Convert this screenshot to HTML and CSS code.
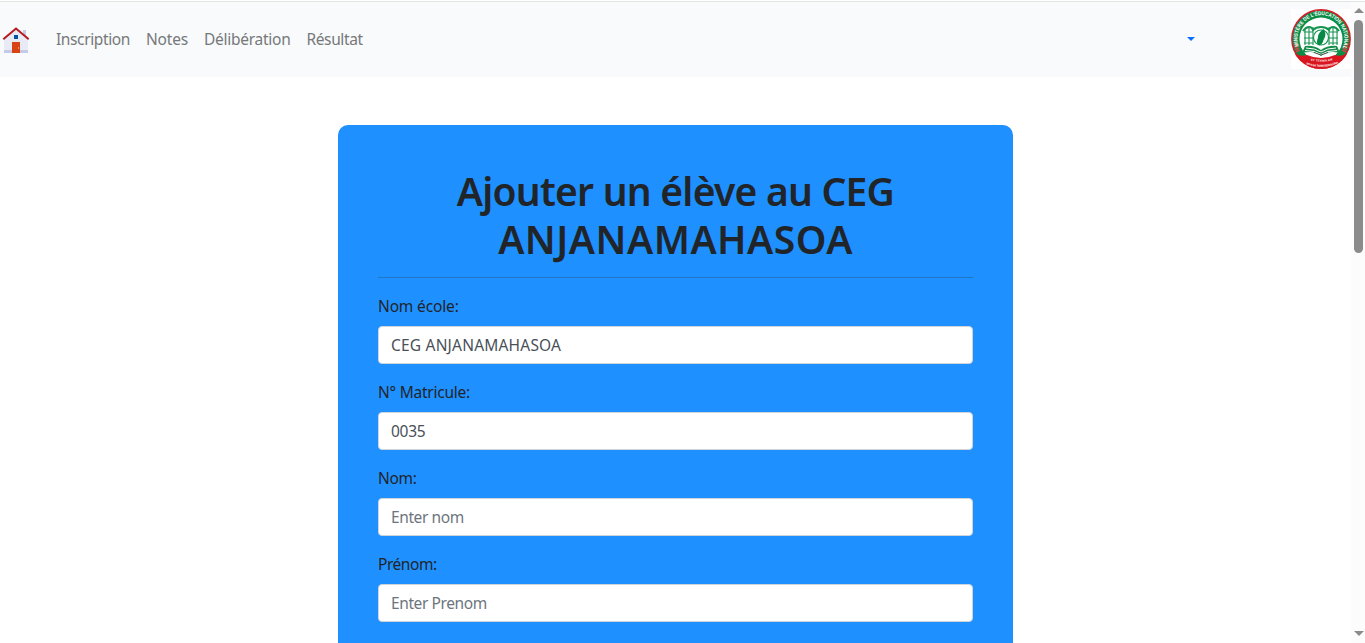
FILE: index.html
```html
<!DOCTYPE html>
<html lang="fr">
<head>
<meta charset="utf-8">
<title>Inscription</title>
<link rel="stylesheet" href="styles.css">
</head>
<body>
<div class="window">
  <div class="page">
    <nav class="navbar">
      <a class="brand" href="#" aria-label="Accueil">
        <svg width="32" height="32" viewBox="0 0 32 32">
          <path fill="#c5cae9" d="M23 6h3v8h-3z"/>
          <path fill="#e8eaf6" d="M4 14 16 4l12 10v13H4z"/>
          <path fill="#c5cae9" d="M4 26h24v3H4z"/>
          <path fill="#d84315" d="M12 18h8v11h-8z"/>
          <path fill="#01579b" d="M14 11h4v4h-4z"/>
          <path fill="none" stroke="#b71c1c" stroke-width="2" d="M3.300 15.300 16 4.600l12.700 10.700"/>
          <path fill="#ff8a65" d="M18 23h1v2h-1z"/>
        </svg>
      </a>
      <ul class="links">
        <li><a class="l-ins" href="#">Inscription</a></li>
        <li><a class="l-not" href="#">Notes</a></li>
        <li><a class="l-del" href="#">Délibération</a></li>
        <li><a class="l-res" href="#">Résultat</a></li>
      </ul>
      <span class="caret"></span>
      <svg class="seal" width="60" height="60" viewBox="0 0 60 60">
        <defs>
          <path id="arc-top" d="M8.900 40A23.500 23.500 0 1 1 51.100 40"/>
          <path id="arc-low" d="M11 53.500Q30 62 49 53.500"/>
          <path id="arc-mid" d="M14 49.500Q30 56 46 49.500"/>
          <clipPath id="disc"><circle cx="30" cy="30" r="30"/></clipPath>
        </defs>
        <path fill="#fff" d="M0 0h60v60H0z"/>
        <circle cx="30" cy="30" r="29.100" fill="#0b8c45" stroke="#d5202b" stroke-width="1.600"/>
        <circle cx="30" cy="30" r="21.500" fill="#fff"/>
        <path fill="#d9161f" clip-path="url(#disc)" d="M4 44.500Q10 48 16 46Q30 52 44 46Q50 48 56 44.500L60 60H0z"/>
        <g fill="none" stroke="#169451" stroke-width="1.100">
          <path d="M13 23h9M47 23h-9M13 29h9M47 29h-9M13 34h9M47 34h-9M14 20v16M18 19v17M22 18v18M46 20v16M42 19v17M38 18v18"/>
          <path d="M12 22q3-4 6-4t4 3q3-3 8-3t8 3q1-3 4-3t6 4" stroke-width="2"/>
        </g>
        <circle cx="30" cy="28.500" r="7.500" fill="#fff" stroke="#169451" stroke-width="1.200"/>
        <path fill="#078a45" d="M32.500 20c3 4 2 8 0 11-1 4-2.500 5-4.500 5.500-3-2-2-5-1-8 0-4 2.500-6 5.500-8.500z"/>
        <path fill="#168c4b" d="M14 37q9-1 16 4 7-5 16-4l3 7q-12-3-19 3-7-6-19-3z"/>
        <path fill="none" stroke="#fff" d="M15 39q9 0 15 4 6-4 15-4M14 41.500q10 0 16 4 6-4 16-4"/>
        <path fill="none" stroke="#444" stroke-width=".9" d="M23 43.500l7 2.500 7-2.500"/>
        <path stroke="#d9454b" stroke-width="4" stroke-dasharray="1.500 .7" fill="none" d="M5 35q.5 4 2.500 8M55 35q-.5 4-2.500 8"/>
        <text class="seal-top"><textPath href="#arc-top" startOffset="3" textLength="94" lengthAdjust="spacingAndGlyphs">MINISTÈRE DE L'ÉDUCATION NATIONALE</textPath></text>
        <text class="seal-low"><textPath href="#arc-mid" startOffset="6" textLength="22">ET TEKNIKAM</textPath></text>
        <text class="seal-low"><textPath href="#arc-low" startOffset="4.500" textLength="33">NO-ASA TANIN'SEKOLONA</textPath></text>
      </svg>
    </nav>
    <form class="card">
      <h1><span class="h-a">Ajouter un élève au CEG</span><br><span class="h-b">ANJANAMAHASOA</span></h1>
      <hr>
      <div class="group"><label class="f-ecole" for="ecole">Nom école:</label><input class="v-ecole" id="ecole" value="CEG ANJANAMAHASOA"></div>
      <div class="group"><label class="f-mat" for="mat">N° Matricule:</label><input class="v-mat" id="mat" value="0035"></div>
      <div class="group"><label class="f-nom" for="nom">Nom:</label><input class="v-nom" id="nom" placeholder="Enter nom"></div>
      <div class="group"><label class="f-pre" for="prenom">Prénom:</label><input class="v-pre" id="prenom" placeholder="Enter Prenom"></div>
    </form>
  </div>
  <div class="scrollbar">
    <svg width="10" height="5" viewBox="0 0 10 5"><path fill="#8b8b8b" d="M5 0l5 5H0z"/></svg>
    <div class="thumb"></div>
    <svg class="down" width="10" height="5" viewBox="0 0 10 5"><path fill="#8b8b8b" d="M0 0h10L5 5z"/></svg>
  </div>
</div>
</body>
</html>
```
FILE: styles.css
```css
* { box-sizing: border-box; }
body {
  margin: 0;
  padding-top: 1px;
  overflow: hidden;
  background: #fff;
  color: #212529;
  font: 16px/24px "Segoe UI", "Noto Sans", sans-serif;
}
.window {
  display: flex;
  height: 642px;
  border-top: 1px solid #dee5e3;
}
.page {
  flex: 1;
  min-width: 0;
  overflow: hidden;
}
.navbar {
  display: flex;
  align-items: center;
  height: 75px;
  padding-bottom: 1px;
  background: #f8fafc;
}
.brand { display: flex; width: 48px; padding-top: 2px; }
.links {
  display: flex;
  margin: 0;
  padding: 0 0 1px;
  list-style: none;
}
.links a {
  display: block;
  padding: 0 8px;
  color: #777879;
  font-size: 15.5px;
  text-decoration: none;
  white-space: nowrap;
}
.links li:nth-child(1) { width: 90px; }
.links li:nth-child(2) { width: 58px; }
.links li:nth-child(3) { width: 102.500px; }
.links li:nth-child(4) { width: 72px; }
.l-ins { letter-spacing: -.38px; }
.l-not { letter-spacing: -.2px; }
.l-del { letter-spacing: -.26px; }
.l-res { letter-spacing: -.38px; }
.caret {
  margin-left: auto;
  margin-right: 96px;
  margin-bottom: 1px;
  border: 4.500px solid transparent;
  border-top-color: #0d6efd;
  border-bottom: 0;
}
.seal { flex: none; }
.seal-top, .seal-low {
  fill: #fff;
  font-family: "Liberation Sans", sans-serif;
  font-weight: 700;
}
.seal-top { font-size: 5.400px; }
.seal-low { font-size: 2.800px; }
.card {
  width: 675px;
  height: 760px;
  margin: 48px auto 0;
  padding: 42px 40px;
  border-radius: 10px;
  background: #1e90ff;
}
h1 {
  margin: 0;
  font-size: 39px;
  font-weight: 600;
  line-height: 48px;
  text-align: center;
  white-space: nowrap;
}
.h-a { letter-spacing: -.76px; }
.h-b { letter-spacing: .5px; }
hr {
  height: 1px;
  margin: 14px 0 16px;
  border: 0;
  background: #1f75c7;
}
.group { margin-bottom: 16px; }
label {
  display: table;
  margin-bottom: 8px;
  font-size: 15.5px;
  letter-spacing: -.3px;
}
.f-ecole { letter-spacing: -.15px; }
.f-mat { letter-spacing: -.25px; }
.f-pre { letter-spacing: -.45px; }
input {
  display: block;
  width: 100%;
  height: 38px;
  padding: 6px 12px;
  border: 1px solid #ced4da;
  border-radius: 4px;
  background: #fff;
  color: #495057;
  font: inherit;
  font-size: 15.5px;
  letter-spacing: -.4px;
}
.v-ecole { letter-spacing: .2px; }
.v-mat { letter-spacing: -.3px; }
input::placeholder { color: #6c757d; opacity: 1; }
.scrollbar {
  display: flex;
  flex-direction: column;
  align-items: center;
  width: 14px;
  padding: 6px 0 7px 1px;
  background: #fcfcfc;
}
.thumb {
  width: 9px;
  height: 233px;
  margin-top: 7px;
  border-radius: 5px;
  background: #8b8b8b;
}
.down { margin-top: auto; }
```
